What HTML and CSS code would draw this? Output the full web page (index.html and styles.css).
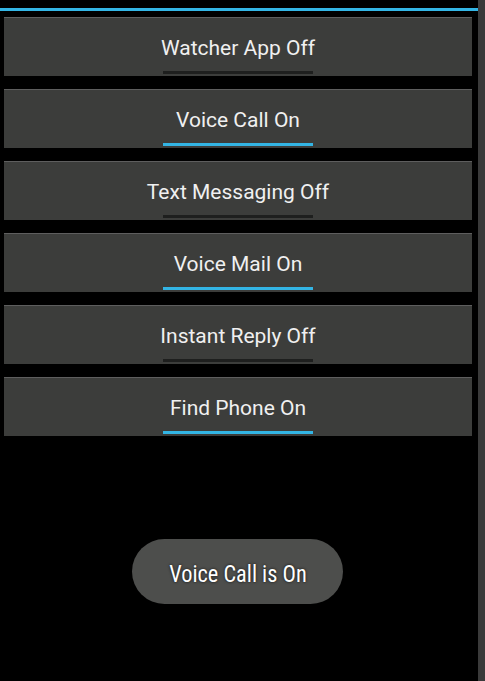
FILE: index.html
```html
<!DOCTYPE html>
<html>
<head>
<meta charset="utf-8">
<link rel="stylesheet" href="styles.css">
</head>
<body>
<div class="screen">
  <div class="main">
    <div class="topbar"></div>
    <div class="list">
      <div class="card"><span class="label">Watcher App Off</span><span class="ind off"></span></div>
      <div class="card"><span class="label">Voice Call On</span><span class="ind on"></span></div>
      <div class="card"><span class="label">Text Messaging Off</span><span class="ind off"></span></div>
      <div class="card"><span class="label">Voice Mail On</span><span class="ind on"></span></div>
      <div class="card"><span class="label">Instant Reply Off</span><span class="ind off"></span></div>
      <div class="card"><span class="label">Find Phone On</span><span class="ind on"></span></div>
    </div>
  </div>
  <div class="strip"></div>
</div>
<div class="toast"><span class="toast-text">Voice Call is On</span></div>
</body>
</html>
```
FILE: styles.css
```css
html, body {
  margin: 0;
  padding: 0;
  background: #000;
  height: 100%;
}
body {
  font-family: Roboto, "Noto Sans", sans-serif;
  position: relative;
  overflow: hidden;
}
.screen {
  display: flex;
  height: 681px;
}
.main {
  flex: 1;
  padding-top: 8px;
}
.strip {
  width: 7px;
  background: #3a3a3a;
}
.topbar {
  height: 3px;
  background: #33b5e5;
}
.list {
  display: flex;
  flex-direction: column;
  gap: 13px;
  padding: 6px 6px 0 4px;
}
.card {
  height: 58px;
  border-top: 1px solid #5e5e5e;
  background: #3c3d3b;
  display: flex;
  flex-direction: column;
  align-items: center;
  box-sizing: content-box;
}
.label {
  margin-top: 17px;
  font-size: 21px;
  line-height: 26px;
  color: #f0f0f0;
}
.ind {
  display: block;
  width: 150px;
  height: 3px;
  margin-top: 10px;
}
.ind.off { background: #1e1f1e; }
.ind.on { background: #33b5e5; }
.toast {
  position: absolute;
  left: 132px;
  top: 539px;
  width: 211px;
  height: 65px;
  border-radius: 33px;
  background: #4d4e4c;
  display: flex;
  align-items: center;
  justify-content: center;
}
.toast-text {
  font-family: "Roboto Condensed", "DejaVu Sans Condensed", Roboto, sans-serif;
  font-stretch: condensed;
  font-size: 24px;
  color: #fff;
  margin-top: 4px;
  display: inline-block;
  transform: scaleX(0.93);
  text-shadow: 0 0 3px rgba(0,0,0,0.8);
}
```
